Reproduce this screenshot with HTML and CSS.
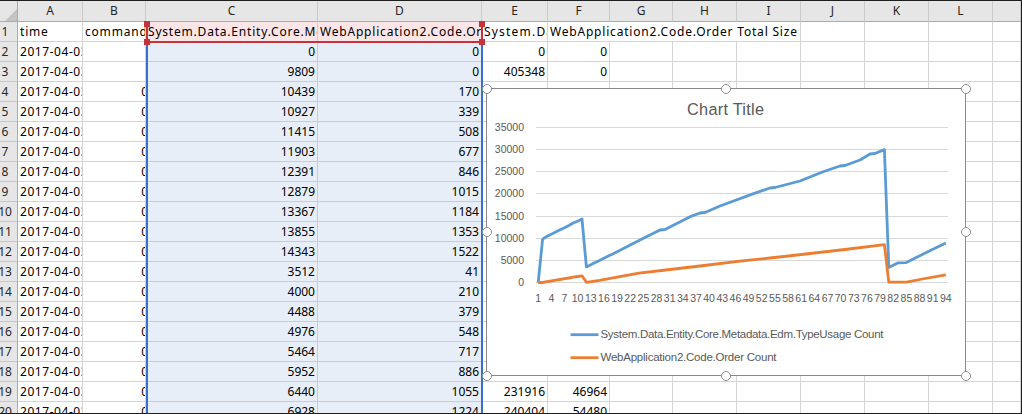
FILE: index.html
```html
<!DOCTYPE html>
<html>
<head>
<meta charset="utf-8">
<link rel="stylesheet" href="styles.css">
</head>
<body>
<div class="sheet">
  <div class="grid">
    <div class="corner"><div class="tri"></div></div>
    <div class="ch">A</div><div class="ch">B</div><div class="ch">C</div><div class="ch">D</div><div class="ch">E</div><div class="ch">F</div><div class="ch">G</div><div class="ch">H</div><div class="ch">I</div><div class="ch">J</div><div class="ch">K</div><div class="ch">L</div><div class="ch"></div>

    <div class="rh">1</div><div class="c t">time</div><div class="c t">command</div><div class="c t hl">System.Data.Entity.Core.Metadata.Edm.TypeUsage Count</div><div class="c t hl">WebApplication2.Code.Order Count</div><div class="c t wide">System.Data.Entity.Core.Metadata.Edm.TypeUsage Total Size</div><div class="c t span4">WebApplication2.Code.Order Total Size</div><div class="c"></div><div class="c"></div><div class="c"></div><div class="c"></div>

    <div class="rh">2</div><div class="c d">2017-04-03 16:41:05</div><div class="c"></div><div class="c n sel">0</div><div class="c n sel">0</div><div class="c n">0</div><div class="c n">0</div><div class="c"></div><div class="c"></div><div class="c"></div><div class="c"></div><div class="c"></div><div class="c"></div><div class="c"></div>
    <div class="rh">3</div><div class="c d">2017-04-03 16:41:15</div><div class="c"></div><div class="c n sel">9809</div><div class="c n sel">0</div><div class="c n">405348</div><div class="c n">0</div><div class="c"></div><div class="c"></div><div class="c"></div><div class="c"></div><div class="c"></div><div class="c"></div><div class="c"></div>
    <div class="rh">4</div><div class="c d">2017-04-03 16:41:25</div><div class="c n cut"><span>0</span></div><div class="c n sel">10439</div><div class="c n sel">170</div><div class="c"></div><div class="c"></div><div class="c"></div><div class="c"></div><div class="c"></div><div class="c"></div><div class="c"></div><div class="c"></div><div class="c"></div>
    <div class="rh">5</div><div class="c d">2017-04-03 16:41:35</div><div class="c n cut"><span>0</span></div><div class="c n sel">10927</div><div class="c n sel">339</div><div class="c"></div><div class="c"></div><div class="c"></div><div class="c"></div><div class="c"></div><div class="c"></div><div class="c"></div><div class="c"></div><div class="c"></div>
    <div class="rh">6</div><div class="c d">2017-04-03 16:41:45</div><div class="c n cut"><span>0</span></div><div class="c n sel">11415</div><div class="c n sel">508</div><div class="c"></div><div class="c"></div><div class="c"></div><div class="c"></div><div class="c"></div><div class="c"></div><div class="c"></div><div class="c"></div><div class="c"></div>
    <div class="rh">7</div><div class="c d">2017-04-03 16:41:55</div><div class="c n cut"><span>0</span></div><div class="c n sel">11903</div><div class="c n sel">677</div><div class="c"></div><div class="c"></div><div class="c"></div><div class="c"></div><div class="c"></div><div class="c"></div><div class="c"></div><div class="c"></div><div class="c"></div>
    <div class="rh">8</div><div class="c d">2017-04-03 16:42:05</div><div class="c n cut"><span>0</span></div><div class="c n sel">12391</div><div class="c n sel">846</div><div class="c"></div><div class="c"></div><div class="c"></div><div class="c"></div><div class="c"></div><div class="c"></div><div class="c"></div><div class="c"></div><div class="c"></div>
    <div class="rh">9</div><div class="c d">2017-04-03 16:42:15</div><div class="c n cut"><span>0</span></div><div class="c n sel">12879</div><div class="c n sel">1015</div><div class="c"></div><div class="c"></div><div class="c"></div><div class="c"></div><div class="c"></div><div class="c"></div><div class="c"></div><div class="c"></div><div class="c"></div>
    <div class="rh">10</div><div class="c d">2017-04-03 16:42:25</div><div class="c n cut"><span>0</span></div><div class="c n sel">13367</div><div class="c n sel">1184</div><div class="c"></div><div class="c"></div><div class="c"></div><div class="c"></div><div class="c"></div><div class="c"></div><div class="c"></div><div class="c"></div><div class="c"></div>
    <div class="rh">11</div><div class="c d">2017-04-03 16:42:35</div><div class="c n cut"><span>0</span></div><div class="c n sel">13855</div><div class="c n sel">1353</div><div class="c"></div><div class="c"></div><div class="c"></div><div class="c"></div><div class="c"></div><div class="c"></div><div class="c"></div><div class="c"></div><div class="c"></div>
    <div class="rh">12</div><div class="c d">2017-04-03 16:42:45</div><div class="c n cut"><span>0</span></div><div class="c n sel">14343</div><div class="c n sel">1522</div><div class="c"></div><div class="c"></div><div class="c"></div><div class="c"></div><div class="c"></div><div class="c"></div><div class="c"></div><div class="c"></div><div class="c"></div>
    <div class="rh">13</div><div class="c d">2017-04-03 16:42:55</div><div class="c n cut"><span>0</span></div><div class="c n sel">3512</div><div class="c n sel">41</div><div class="c"></div><div class="c"></div><div class="c"></div><div class="c"></div><div class="c"></div><div class="c"></div><div class="c"></div><div class="c"></div><div class="c"></div>
    <div class="rh">14</div><div class="c d">2017-04-03 16:43:05</div><div class="c n cut"><span>0</span></div><div class="c n sel">4000</div><div class="c n sel">210</div><div class="c"></div><div class="c"></div><div class="c"></div><div class="c"></div><div class="c"></div><div class="c"></div><div class="c"></div><div class="c"></div><div class="c"></div>
    <div class="rh">15</div><div class="c d">2017-04-03 16:43:15</div><div class="c n cut"><span>0</span></div><div class="c n sel">4488</div><div class="c n sel">379</div><div class="c"></div><div class="c"></div><div class="c"></div><div class="c"></div><div class="c"></div><div class="c"></div><div class="c"></div><div class="c"></div><div class="c"></div>
    <div class="rh">16</div><div class="c d">2017-04-03 16:43:25</div><div class="c n cut"><span>0</span></div><div class="c n sel">4976</div><div class="c n sel">548</div><div class="c"></div><div class="c"></div><div class="c"></div><div class="c"></div><div class="c"></div><div class="c"></div><div class="c"></div><div class="c"></div><div class="c"></div>
    <div class="rh">17</div><div class="c d">2017-04-03 16:43:35</div><div class="c n cut"><span>0</span></div><div class="c n sel">5464</div><div class="c n sel">717</div><div class="c"></div><div class="c"></div><div class="c"></div><div class="c"></div><div class="c"></div><div class="c"></div><div class="c"></div><div class="c"></div><div class="c"></div>
    <div class="rh">18</div><div class="c d">2017-04-03 16:43:45</div><div class="c n cut"><span>0</span></div><div class="c n sel">5952</div><div class="c n sel">886</div><div class="c n">214040</div><div class="c n">39628</div><div class="c"></div><div class="c"></div><div class="c"></div><div class="c"></div><div class="c"></div><div class="c"></div><div class="c"></div>
    <div class="rh">19</div><div class="c d">2017-04-03 16:43:55</div><div class="c n cut"><span>0</span></div><div class="c n sel">6440</div><div class="c n sel">1055</div><div class="c n">231916</div><div class="c n">46964</div><div class="c"></div><div class="c"></div><div class="c"></div><div class="c"></div><div class="c"></div><div class="c"></div><div class="c"></div>
    <div class="rh">20</div><div class="c d">2017-04-03 16:44:05</div><div class="c n cut"><span>0</span></div><div class="c n sel">6928</div><div class="c n sel">1224</div><div class="c n">240404</div><div class="c n">54480</div><div class="c"></div><div class="c"></div><div class="c"></div><div class="c"></div><div class="c"></div><div class="c"></div><div class="c"></div>
  </div>

  <div class="rng-blue"></div>
  <div class="rng-red"></div>
  <div class="sq sq-tl"></div><div class="sq sq-bl"></div><div class="sq sq-tr"></div><div class="sq sq-br"></div>

  <div class="chart">
    <svg class="plot" width="478" height="286" viewBox="487 89 478 286">
      <text class="title" x="725.5" y="115" text-anchor="middle" textLength="77">Chart Title</text>
      <g class="grid-lines">
        <line x1="536" y1="127.5" x2="948" y2="127.5"/>
        <line x1="536" y1="149.5" x2="948" y2="149.5"/>
        <line x1="536" y1="171.5" x2="948" y2="171.5"/>
        <line x1="536" y1="193.5" x2="948" y2="193.5"/>
        <line x1="536" y1="216.5" x2="948" y2="216.5"/>
        <line x1="536" y1="238.5" x2="948" y2="238.5"/>
        <line x1="536" y1="260.5" x2="948" y2="260.5"/>
        <line x1="536" y1="282.5" x2="948" y2="282.5"/>
      </g>
      <g class="ylab" text-anchor="end">
        <text x="524" y="130.8">35000</text>
        <text x="524" y="152.8">30000</text>
        <text x="524" y="174.8">25000</text>
        <text x="524" y="196.8">20000</text>
        <text x="524" y="219.8">15000</text>
        <text x="524" y="241.8">10000</text>
        <text x="524" y="263.8">5000</text>
        <text x="524" y="285.8">0</text>
      </g>
      <g class="xlab" text-anchor="middle">
        <text x="538.2" y="302.3">1</text>
        <text x="551.3" y="302.3">4</text>
        <text x="564.5" y="302.3">7</text>
        <text x="577.6" y="302.3">10</text>
        <text x="590.8" y="302.3">13</text>
        <text x="603.9" y="302.3">16</text>
        <text x="617.1" y="302.3">19</text>
        <text x="630.2" y="302.3">22</text>
        <text x="643.4" y="302.3">25</text>
        <text x="656.5" y="302.3">28</text>
        <text x="669.7" y="302.3">31</text>
        <text x="682.8" y="302.3">34</text>
        <text x="696.0" y="302.3">37</text>
        <text x="709.1" y="302.3">40</text>
        <text x="722.3" y="302.3">43</text>
        <text x="735.4" y="302.3">46</text>
        <text x="748.6" y="302.3">49</text>
        <text x="761.7" y="302.3">52</text>
        <text x="774.9" y="302.3">55</text>
        <text x="788.0" y="302.3">58</text>
        <text x="801.2" y="302.3">61</text>
        <text x="814.3" y="302.3">64</text>
        <text x="827.5" y="302.3">67</text>
        <text x="840.6" y="302.3">70</text>
        <text x="853.8" y="302.3">73</text>
        <text x="866.9" y="302.3">76</text>
        <text x="880.1" y="302.3">79</text>
        <text x="893.2" y="302.3">82</text>
        <text x="906.4" y="302.3">85</text>
        <text x="919.5" y="302.3">88</text>
        <text x="932.7" y="302.3">91</text>
        <text x="945.8" y="302.3">94</text>
      </g>
      <polyline class="s-blue" points="538.2,282.5 542.6,239.1 547,236.3 551.3,234.2 555.7,232.0 560.1,229.8 564.5,227.7 568.9,225.5 573.2,223.0 577.6,221.3 582,219 586.4,266.9 590.8,264.8 595.2,262.6 599.5,260.5 603.9,258.3 608.3,256.1 612.7,254.0 617.1,251.8 643.4,238.2 660,230 665,229.5 691.6,216.1 700,213 705,212.5 720,206 752.9,193.9 770,188 775,187.5 800,181 823.1,171.8 840,166 845,165.5 860,160 870,154 875,153.5 884.4,149.6 888.8,267.6 897.6,262.9 906.3,262.6 928.3,251.5 945.8,243"/>
      <polyline class="s-orange" points="538.2,282.5 542.6,282.5 547,281.7 551.3,281.0 555.7,280.2 560.1,279.5 564.5,278.7 568.9,278.0 573.2,277.2 577.6,276.5 582,275.8 586.4,282.3 599.5,280.4 617.1,277.1 639,273.2 670,269.5 700,266 740,261.2 770,258 805.8,254 845,249.5 884.4,244.7 888.8,282.1 906.3,282.1 925,278.5 945.8,274.8"/>
      <line class="s-blue" x1="570.5" y1="334.7" x2="598.5" y2="334.7"/>
      <line class="s-orange" x1="570.5" y1="357.7" x2="598.5" y2="357.7"/>
      <text class="leg" x="600.5" y="337.7" textLength="283">System.Data.Entity.Core.Metadata.Edm.TypeUsage Count</text>
      <text class="leg" x="600.5" y="360.7" textLength="176">WebApplication2.Code.Order Count</text>
    </svg>
    <div class="hd hd-tl"></div><div class="hd hd-tc"></div><div class="hd hd-tr"></div>
    <div class="hd hd-ml"></div><div class="hd hd-mr"></div>
    <div class="hd hd-bl"></div><div class="hd hd-bc"></div><div class="hd hd-br"></div>
  </div>
</div>
</body>
</html>
```
FILE: styles.css
```css
* { box-sizing: border-box; }
body { margin: 0; background: #fff; }
.sheet {
  position: relative;
  width: 1022px;
  height: 414px;
  border-top: 1px solid #1e1e1e;
  border-right: 1px solid #1e1e1e;
  border-bottom: 1px solid #1e1e1e;
  overflow: hidden;
  font-family: "Noto Sans", "Open Sans", sans-serif;
  font-size: 12px;
  color: #000;
}
.grid {
  display: grid;
  grid-template-columns: 18px 65px 63px 172px 164px 66px 62px 63px 64px 64px 64px 64px 64px 28px;
  grid-template-rows: 21px;
  grid-auto-rows: 20px;
}
.corner {
  background: #e6e6e6;
  border-right: 1px solid #ababab;
  border-bottom: 1px solid #ababab;
  display: flex;
  align-items: flex-end;
  justify-content: flex-end;
}
.tri {
  width: 12px;
  height: 12px;
  background: #c4c4c4;
  clip-path: polygon(100% 0, 100% 100%, 0 100%);
}
.ch {
  background: #e6e6e6;
  border-right: 1px solid #cacaca;
  border-bottom: 1px solid #ababab;
  text-align: center;
  line-height: 20px;
  color: #262626;
}
.rh {
  background: #e6e6e6;
  border-right: 1px solid #ababab;
  border-bottom: 1px solid #c6c6c6;
  display: flex;
  justify-content: center;
  padding-right: 7px;
  line-height: 19px;
  color: #262626;
  white-space: nowrap;
}
.c {
  border-right: 1px solid #d4d4d4;
  border-bottom: 1px solid #d4d4d4;
  overflow: hidden;
  white-space: nowrap;
  padding: 0 2px;
  line-height: 19px;
}
.t { letter-spacing: 0.8px; }
.wide { letter-spacing: 1.2px; }
.d { letter-spacing: 0.55px; }
.n { text-align: right; }
.cut { padding-right: 0; }
.cut span { margin-right: -3px; }
.span4 { grid-column: span 4; }
.sel { background: #e8eef7; border-color: #c8cdd5; }
.hl { background: #fbe5e6; border-right-color: #e6c8c9; }

.rng-blue {
  position: absolute;
  left: 146px;
  top: 42px;
  width: 337px;
  height: 400px;
  border-left: 2px solid #3b6ec7;
  border-right: 2px solid #3b6ec7;
}
.rng-red {
  position: absolute;
  left: 146px;
  top: 21px;
  width: 337px;
  height: 21px;
  border-left: 2px solid #c4323c;
  border-right: 2px solid #c4323c;
  border-bottom: 2px solid #c4323c;
}
.sq {
  position: absolute;
  width: 6px;
  height: 6px;
  background: #c4323c;
}
.sq-tl { left: 144px; top: 20px; }
.sq-bl { left: 144px; top: 38px; }
.sq-tr { left: 479px; top: 20px; }
.sq-br { left: 479px; top: 38px; }

.chart {
  position: absolute;
  left: 486px;
  top: 87px;
  width: 480px;
  height: 288px;
  border: 1px solid #8a8a8a;
  background: #fff;
}
.plot { display: block; font-family: "Liberation Sans", Arial, sans-serif; }
.title { font-size: 16.3px; fill: #595959; }
.grid-lines line { stroke: #d9d9d9; stroke-width: 1; }
.ylab text, .xlab text { font-size: 10.5px; fill: #595959; }
.leg { font-size: 11.5px; fill: #595959; }
.s-blue { fill: none; stroke: #5b9bd5; stroke-width: 2.8; stroke-linejoin: round; }
.s-orange { fill: none; stroke: #ed7d31; stroke-width: 2.8; stroke-linejoin: round; }
.hd {
  position: absolute;
  width: 10px;
  height: 10px;
  border: 1.5px solid #8f8f8f;
  border-radius: 50%;
  background: #fff;
}
.hd-tl { left: -5.5px; top: -5.5px; }
.hd-tc { left: calc(50% - 5px); top: -5.5px; }
.hd-tr { left: calc(100% - 4.5px); top: -5.5px; }
.hd-ml { left: -5.5px; top: calc(50% - 5px); }
.hd-mr { left: calc(100% - 4.5px); top: calc(50% - 5px); }
.hd-bl { left: -5.5px; top: calc(100% - 4.5px); }
.hd-bc { left: calc(50% - 5px); top: calc(100% - 4.5px); }
.hd-br { left: calc(100% - 4.5px); top: calc(100% - 4.5px); }
```
